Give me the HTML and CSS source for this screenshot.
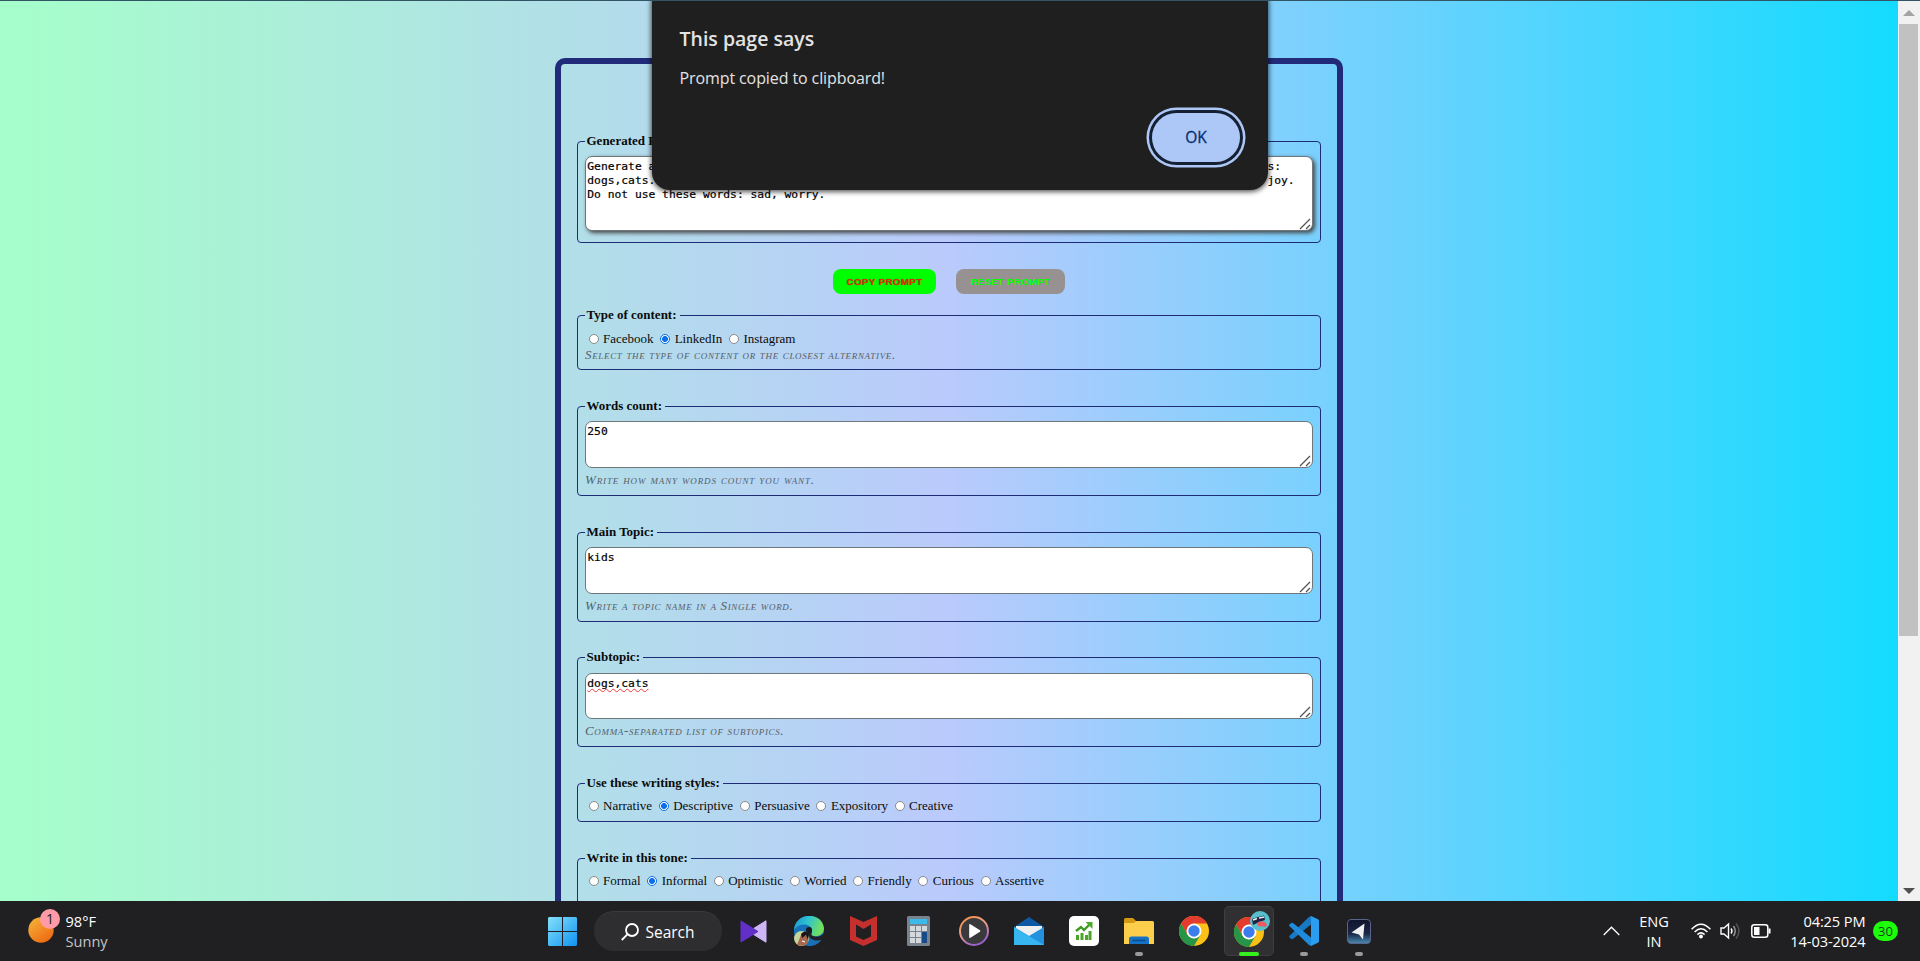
FILE: index.html
```html
<!DOCTYPE html>
<html lang="en">
<head>
<meta charset="utf-8">
<title>Prompt Generator</title>
<link rel="stylesheet" href="styles.css">
</head>
<body>
<svg width="0" height="0" class="defs">
  <defs>
    <symbol id="grip" viewBox="0 0 12 12"><path d="M1 11L11 1M7 11L11 7" stroke="#555" stroke-width="1.3" fill="none"/></symbol>
    <symbol id="chrome" viewBox="0 0 30 30">
      <circle cx="15" cy="15" r="15" fill="#fbc116"/>
      <path d="M2 7.5A15 15 0 0 1 28 7.5L15 7.5 8.500 18.800Z" fill="#e33b2e"/>
      <path d="M2 7.500A15 15 0 0 0 15 30L21.500 18.800 15 22.500 8.500 18.800Z" fill="#269547"/>
      <circle cx="15" cy="15" r="7.500" fill="#fff"/><circle cx="15" cy="15" r="5.700" fill="#3c7ded"/>
    </symbol>
  </defs>
</svg>
<div class="screen">
  <div class="browser">
    <main class="viewport">
      <form class="panel">
        <fieldset class="group output-group"><legend>Generated Prompt:</legend>
          <div class="field tall shadow"><textarea class="area" spellcheck="false">Generate a descriptive and informal LinkedIn post with 250 words about kids, covering these subtopics:
dogs,cats. Use an informal tone and a descriptive writing style. Use these words: happy, laugh, and joy.
Do not use these words: sad, worry.</textarea><svg class="grip"><use href="#grip"/></svg></div>
        </fieldset>
        <div class="actions"><button type="button" class="btn copy">COPY PROMPT</button><button type="button" class="btn reset">RESET PROMPT</button></div>
        <fieldset class="group type-group"><legend>Type of content:</legend>
          <div class="radios"><label><input type="radio" name="type">Facebook</label><label><input type="radio" name="type" checked>LinkedIn</label><label><input type="radio" name="type">Instagram</label></div>
          <p class="hint type-hint">Select the type of content or the closest alternative.</p>
        </fieldset>
        <fieldset class="group text-group"><legend>Words count:</legend>
          <div class="field"><textarea class="area" spellcheck="false">250</textarea><svg class="grip"><use href="#grip"/></svg></div>
          <p class="hint want-hint">Write how many words count you want.</p>
        </fieldset>
        <fieldset class="group text-group"><legend>Main Topic:</legend>
          <div class="field"><textarea class="area" spellcheck="false">kids</textarea><svg class="grip"><use href="#grip"/></svg></div>
          <p class="hint">Write a topic name in a Single word.</p>
        </fieldset>
        <fieldset class="group text-group sub-group"><legend>Subtopic:</legend>
          <div class="field short"><div class="area"><span class="misspelled">dogs,cats</span></div><svg class="grip"><use href="#grip"/></svg></div>
          <p class="hint">Comma-separated list of subtopics.</p>
        </fieldset>
        <fieldset class="group style-group"><legend>Use these writing styles:</legend>
          <div class="radios"><label><input type="radio" name="style">Narrative</label><label><input type="radio" name="style" checked>Descriptive</label><label><input type="radio" name="style">Persuasive</label><label><input type="radio" name="style">Expository</label><label><input type="radio" name="style">Creative</label></div>
        </fieldset>
        <fieldset class="group tone-group"><legend>Write in this tone:</legend>
          <div class="radios"><label><input type="radio" name="tone">Formal</label><label><input type="radio" name="tone" checked>Informal</label><label><input type="radio" name="tone">Optimistic</label><label><input type="radio" name="tone">Worried</label><label><input type="radio" name="tone">Friendly</label><label><input type="radio" name="tone">Curious</label><label><input type="radio" name="tone">Assertive</label></div>
        </fieldset>
      </form>
    </main>
    <aside class="scrollbar">
      <svg width="12" height="6" viewBox="0 0 12 6"><path d="M0 6L6 0 12 6Z" fill="#a3a3a3"/></svg>
      <div class="thumb"></div>
      <svg class="down" width="12" height="6" viewBox="0 0 12 6"><path d="M0 0H12L6 6Z" fill="#505050"/></svg>
    </aside>
    <div class="dialog">
      <h1 class="dialog-title">This page says</h1>
      <p class="dialog-text">Prompt copied to clipboard!</p>
      <button type="button" class="ok">OK</button>
    </div>
  </div>
  <footer class="taskbar">
    <div class="weather">
      <svg width="34" height="38" viewBox="0 0 34 38">
        <defs><linearGradient id="sun" x1="0" y1="0" x2=".7" y2="1"><stop offset="0" stop-color="#f5b83b"/><stop offset="1" stop-color="#ef6a13"/></linearGradient></defs>
        <circle cx="13" cy="22" r="12.7" fill="url(#sun)"/><circle cx="22" cy="11" r="10" fill="#ff9ba6"/>
        <text x="22" y="15.8" text-anchor="middle" class="sun-badge">1</text>
      </svg>
      <div class="weather-text"><span>98°F</span><span class="dim">Sunny</span></div>
    </div>
    <nav class="apps">
      <div class="slot start"><svg width="29" height="29" viewBox="0 0 29 29"><defs><linearGradient id="win" gradientUnits="userSpaceOnUse" x1="0" y1="0" x2="29" y2="29"><stop offset="0" stop-color="#84e0fb"/><stop offset="1" stop-color="#0f94f0"/></linearGradient></defs><path d="M1 0H14V14H0V1ZM15 0H28L29 1V14H15ZM0 15H14V29H1L0 28ZM15 15H29V28L28 29H15Z" fill="url(#win)"/></svg></div>
      <div class="search"><svg width="18" height="18" viewBox="0 0 18 18" fill="none" stroke="#fff" stroke-width="1.8"><circle cx="11" cy="7" r="6"/><path d="M6.6 11.2L.8 17"/></svg><span>Search</span></div>
      <div class="slot"><svg width="27" height="23" viewBox="0 0 27 23"><path d="M26 .8V22.2L12 13.5V9.5Z" fill="#ccb7f4" stroke="#ccb7f4" stroke-linejoin="round"/><path d="M1 1V22L18 11.5Z" fill="#6230c8" stroke="#6230c8" stroke-linejoin="round"/></svg></div>
      <div class="slot"><svg width="30" height="30" viewBox="0 0 30 30"><defs><linearGradient id="edge" x1="0" y1="0" x2="1" y2=".3"><stop offset="0" stop-color="#1b92d8"/><stop offset=".5" stop-color="#2fc4cf"/><stop offset="1" stop-color="#72e05e"/></linearGradient></defs>
        <circle cx="15" cy="15" r="15" fill="#1673bb"/><path d="M0 14C1-4 28-5 30 12 30 18 25 21 19 20 16 19 18 17 18 15 18 7 5 6 0 14Z" fill="url(#edge)"/><path d="M18 15C18 17 16 19 19 20 23 22 28 20 29.8 17L30 20 27 24C21 26 14 23 14 16Z" fill="#202124"/><path d="M14 17C13 22 19 27 27 24 23 30 16 31 12 29Z" fill="#1b70b5"/>
        <circle cx="7.5" cy="22.5" r="7.5" fill="#c4d49a"/><path d="M3 29L7 19 14 20 14 27 10 30Z" fill="#a8674c"/><path d="M7 18Q11 13 15 18L14 24 12 19 8 22Z" fill="#1a1518"/><path d="M8 25L11 26" stroke="#fff" stroke-width="1.2"/><circle cx="15" cy="14" r="3" fill="#17191c"/></svg></div>
      <div class="slot"><svg width="27" height="30" viewBox="0 0 27 30"><path d="M0 0L13.5 6 27 0V24L13.5 30 0 24ZM6 8.5V20.5L13.5 24 21 20.5V8.5L13.5 13Z" fill="#c5302e" fill-rule="evenodd"/></svg></div>
      <div class="slot"><svg width="23" height="30" viewBox="0 0 23 30"><rect width="23" height="30" rx="1.5" fill="#78838d"/><rect x="3" y="3" width="17" height="5" fill="#3bbbe9"/><path d="M3 10h5v5H3zM9 10h5v5H9zM15 10h5v5h-5zM3 16h5v5H3zM9 16h5v5H9zM3 22h5v5H3zM9 22h5v5H9z" fill="#d4d9dd"/><path d="M15 16h5v11h-5z" fill="#184b88"/></svg></div>
      <div class="slot"><svg width="30" height="30" viewBox="0 0 30 30"><defs><linearGradient id="ring" x1="0" y1="0" x2=".5" y2="1"><stop offset="0" stop-color="#f58a3c"/><stop offset=".5" stop-color="#e8a08a"/><stop offset="1" stop-color="#9a61c9"/></linearGradient></defs><circle cx="15" cy="15" r="14" fill="#3a3a3c" stroke="url(#ring)" stroke-width="2"/><path d="M11 8.8V21.2L20.5 15Z" fill="#fff" stroke="#fff" stroke-width="1.6" stroke-linejoin="round"/></svg></div>
      <div class="slot"><svg width="30" height="28" viewBox="0 0 30 28"><path d="M0 10L15 0 30 10V14H0Z" fill="#0f59a4"/><path d="M2 9H28V17L15 24 2 17Z" fill="#f0f0f0"/><path d="M0 10L15 19 30 10V28H0Z" fill="#2391de"/><path d="M0 10L30 28H0Z" fill="#37b6f2"/></svg></div>
      <div class="slot"><svg width="30" height="30" viewBox="0 0 30 30"><rect width="30" height="30" rx="5" fill="#fff"/><path d="M7 19h3v5H7zM11.500 17h3v7h-3zM16 19h3v5h-3zM19.500 15h3v9h-3z" fill="#4aa32a"/><path d="M7 15L12 11 15 14 21 8" stroke="#3f9a24" stroke-width="2.400" fill="none"/><path d="M16.500 6H23.500V13Z" fill="#4aad2a"/></svg></div>
      <div class="slot"><svg width="30" height="27" viewBox="0 0 30 27"><path d="M0 1.500Q0 0 1.500 0H9L12.500 3.500V8H0Z" fill="#d49a14"/><path d="M0 5H9.500L12.500 3H28.500Q30 3 30 4.500V26H0Z" fill="#fcce4c"/><path d="M5 26V21Q5 18.500 7.500 18.500H22.500Q25 18.500 25 21V26Z" fill="#1572c4"/><path d="M8.500 22.500H21.500" stroke="#0c4c8c" stroke-width="1.500"/></svg><i class="dot"></i></div>
      <div class="slot"><svg width="30" height="30"><use href="#chrome"/></svg></div>
      <div class="slot"><div class="tile"><svg width="38" height="38" viewBox="0 0 38 38"><use href="#chrome" x="0" y="7" width="30" height="30"/><circle cx="26" cy="11" r="10" fill="#57c0cd"/><path d="M18 9L24 7 25 12 19 15ZM24 7L30 5.500 31 10 25 12Z" fill="#1e2341"/><path d="M19 10L23 8.500M25 8L30 7" stroke="#e9edf5" stroke-width="1.700"/><path d="M23 13Q28 9 33 14L32 17 24 16Z" fill="#ea5a60"/></svg></div><i class="dot active"></i></div>
      <div class="slot"><svg width="30" height="30" viewBox="0 0 30 30"><path d="M22 0L29 3.300Q30 4 30 5V25Q30 26 29 26.700L22 30Z" fill="#2a9df0"/><path d="M22 0V8.500L4 23Q3 23.500 2 22.800L.5 21.500Q-.3 20.500 .6 19.700L20 .9Z" fill="#1778c4"/><path d="M22 30V21.500L4 7Q3 6.500 2 7.200L.5 8.500Q-.3 9.500 .6 10.300L20 29.100Z" fill="#1e8bdc"/></svg><i class="dot"></i></div>
      <div class="slot"><svg width="24" height="25" viewBox="0 0 24 25"><defs><linearGradient id="nav" x1="0" y1="0" x2="0" y2="1"><stop offset="0" stop-color="#10142b"/><stop offset=".6" stop-color="#1b2847"/><stop offset="1" stop-color="#4a8cb4"/></linearGradient></defs><rect x=".5" y=".5" width="23" height="24" rx="3.500" fill="url(#nav)" stroke="#58648a"/><path d="M4.500 13.500L17.500 4.500 16 20.500 12 15.500Z" fill="#f0f0f0"/></svg><i class="dot"></i></div>
    </nav>
    <div class="tray">
      <svg class="chev" width="17" height="10" viewBox="0 0 17 10"><path d="M.7 9L8.500 1.200 16.300 9" fill="none" stroke="#fff" stroke-width="1.300"/></svg>
      <div class="lang"><span>ENG</span><span>IN</span></div>
      <svg class="wifi" width="20" height="16" viewBox="0 0 20 16" fill="none" stroke="#fff" stroke-width="1.500"><path d="M.6 6.200Q10-3.600 19.400 6.200M3.600 9Q10 2.600 16.400 9M6.400 11.600Q10 8.200 13.600 11.600"/><circle cx="10" cy="13.500" r="1.200" fill="#fff"/></svg>
      <svg class="vol" width="21" height="18" viewBox="0 0 21 18" fill="none" stroke="#fff" stroke-width="1.400"><path d="M1 6H4L8.500 2V16L4 12H1ZM11 6.500Q13 9 11 11.500"/><path d="M13.500 4Q17 9 13.500 14" stroke="#999"/><path d="M16 1.500Q22 9 16 16.500" stroke="#555"/></svg>
      <svg class="bat" width="20" height="14" viewBox="0 0 20 14"><rect x=".8" y=".8" width="16" height="12.400" rx="2.500" fill="none" stroke="#fff" stroke-width="1.500"/><rect x="3" y="3" width="5.500" height="8" fill="#fff"/><path d="M17.500 4.500H19.500V9.500H17.500Z" fill="#fff"/></svg>
      <div class="clock"><span>04:25 PM</span><span class="date">14-03-2024</span></div>
      <div class="count">30</div>
    </div>
  </footer>
</div>
</body>
</html>
```
FILE: styles.css
```css
* { box-sizing: border-box; }
body { margin: 0; font-family: "Liberation Serif", serif; }
.defs { position: absolute; }
.screen { width: 1920px; height: 961px; display: flex; flex-direction: column; overflow: hidden; }

.browser { position: relative; display: flex; height: 901px; border-top: 1px solid #315564; overflow: hidden; }
.viewport { width: 1898px; height: 900px; padding-top: 57px; overflow: hidden;
  background: linear-gradient(90deg, #a5ffca 0%, #bacafc 50%, #14dbff 100%); }
.panel { width: 788px; height: 1000px; margin-left: 555px; padding: 69px 16px 0; border: 6px solid #222b7a; border-radius: 10px;
  display: flex; flex-direction: column; }

.group { flex: none; width: 744px; height: 98px; margin: 0 0 28px; padding: 0 7px; border: 1px solid #1d2c75; border-radius: 4px; min-width: 0; }
.group legend { height: 17px; padding: 0 3px 0 1.5px; font-weight: bold; font-size: 13px; line-height: 16px; color: #0a0a0a; }
.output-group { height: 110px; margin-bottom: 0; }
.type-group { height: 63px; }
.text-group + .sub-group { margin-top: -1px; }
.style-group { height: 47px; }
.tone-group { height: 63px; }

.field { position: relative; height: 47px; margin-top: 6px; }
.field.tall { height: 75px; }
.field.short { height: 46px; margin-top: 7px; }
.area { display: block; width: 728px; height: 100%; margin: 0; padding: 2.5px 1.300px; border: 1px solid #6f767a; border-radius: 7px;
  background: #fff; color: #000; outline: none; resize: none; overflow: hidden; white-space: pre;
  font: 11.300px/14px "DejaVu Sans Mono", monospace; -webkit-text-stroke: .2px #000; }
.shadow .area { box-shadow: 2px 2px 4px #444; }
.grip { position: absolute; right: 2px; bottom: 1.500px; width: 12px; height: 12px; }
.misspelled { text-decoration: underline wavy #f03838 1px; text-underline-offset: 1px; text-decoration-skip-ink: none; }

.hint { margin: 4px 0 0; font-size: 13px; line-height: 16px; font-style: italic; font-variant: small-caps; letter-spacing: .66px; color: #566069; white-space: nowrap; }
.type-hint { margin-top: 0; }
.want-hint { letter-spacing: .86px; }
.radios { display: flex; height: 16px; margin-top: 6px; padding-left: 3.500px; gap: 6.600px; }
.type-group .radios { margin-top: 7px; }
.radios label { display: flex; align-items: center; gap: 4.500px; font-size: 13px; line-height: 16px; color: #0b0b0b; }
.radios input { appearance: none; width: 10px; height: 10px; margin: 0; border: 1px solid #8a8a8a; border-radius: 50%; background: #fff; }
.radios input:checked { border-color: #0a6fe8; background: radial-gradient(circle, #0a6fe8 0 2.7px, #fff 3.2px); }

.actions { display: flex; justify-content: center; gap: 20px; height: 64px; padding-top: 26px; }
.btn { height: 25px; padding: 0; border: 0; border-radius: 8px; font: bold 9.800px/25px "Liberation Sans", sans-serif; letter-spacing: .35px; }
.copy { width: 103px; background: #0f0; color: #d83000; text-shadow: 0 0 1px #7a5000; }
.reset { width: 109px; background: #979191; color: #0f0; letter-spacing: .2px; }

.scrollbar { width: 22px; background: #f1f1f1; display: flex; flex-direction: column; align-items: center; padding: 9px 1px 7px 0; }
.thumb { width: 19px; height: 612px; margin-top: 8px; background: #c1c1c1; }
.down { margin-top: auto; }

.dialog { position: absolute; left: 652px; top: -16px; width: 616px; height: 205px; padding: 40px 27.500px 0; border-radius: 18px;
  background: #1f1f1f; box-shadow: 0 1px 5px 1px rgba(0,0,0,.65); font-family: "Open Sans", sans-serif; color: #e3e3e3; }
.dialog-title { margin: 0; font-size: 19.500px; line-height: 28px; font-weight: 600; }
.dialog-text { margin: 14px 0 0; font-size: 16px; line-height: 22px; letter-spacing: -.1px; }
.ok { position: absolute; right: 28px; bottom: 28px; width: 88px; height: 49px; padding: 0; border: 0; border-radius: 25px; background: #adc8f7;
  box-shadow: 0 0 0 3px #152033, 0 0 0 5.500px #adc8f7; color: #062e6f; font: 15.500px/49px "Open Sans", sans-serif; -webkit-text-stroke: .3px #062e6f; }

.taskbar { height: 60px; background: #202022; display: flex; align-items: center; color: #fff;
  font: 14.600px/20px "Open Sans", sans-serif; }
.weather { flex: none; width: 535px; display: flex; padding-left: 28px; }
.weather svg { margin-top: -3px; }
.weather-text { display: flex; flex-direction: column; margin-left: 3.500px; }
.dim { color: #c5c5c5; }
.sun-badge { font: 14px "Open Sans", sans-serif; fill: #222; }
.apps { display: flex; align-items: center; height: 60px; margin-right: auto; }
.slot { position: relative; width: 55px; height: 60px; display: flex; align-items: center; justify-content: center; }
.search { width: 128px; height: 40px; margin: 0 4px; border-radius: 20px; background: #2e2e30; border-top: 1px solid #3b3b3d; display: flex; align-items: center; justify-content: center; gap: 6px; font-size: 15.500px; }
.tile { width: 50px; height: 50px; flex: none; border: 1px solid #3e3e41; border-radius: 5px; background: #303033; display: flex; padding: 3px 0 0 9px; }
.dot { position: absolute; bottom: 5px; left: 23.500px; width: 8px; height: 4px; border-radius: 2px; background: #999; }
.dot.active { left: 17.500px; width: 20px; background: #35f01e; }
.tray { display: flex; align-items: center; width: 317px; height: 60px; }
.lang, .clock { display: flex; flex-direction: column; text-align: center; }
.lang { width: 34px; margin-left: 17px; }
.wifi { margin-left: 20px; }
.vol { margin-left: 9px; }
.bat { margin-left: 10px; }
.clock { width: 94.500px; text-align: right; letter-spacing: -.1px; }
.count { width: 25px; height: 20px; margin-left: 7.500px; border-radius: 10px; background: #1dff0a; color: #173d12; text-align: center; font-size: 13px; }
```
